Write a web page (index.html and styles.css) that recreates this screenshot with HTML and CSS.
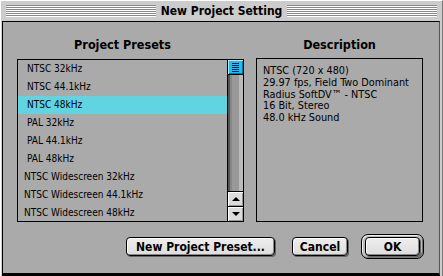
FILE: index.html
```html
<!DOCTYPE html>
<html lang="en">
<head>
  <meta charset="UTF-8">
  <meta name="viewport" content="width=device-width, initial-scale=1.0">
  <title>New Project Setting</title>
  <link rel="stylesheet" href="styles.css">
</head>
<body>
  <div class="window">
    <header class="titlebar">
      <span class="grip"></span>
      <h1 class="title">New Project Setting</h1>
      <span class="grip"></span>
    </header>
    <main class="content">
      <div class="panes">
        <section class="pane presets">
          <h2 class="pane-title">Project Presets</h2>
          <div class="listbox">
            <ul class="list">
              <li>NTSC 32kHz</li>
              <li>NTSC 44.1kHz</li>
              <li class="selected">NTSC 48kHz</li>
              <li>PAL 32kHz</li>
              <li>PAL 44.1kHz</li>
              <li>PAL 48kHz</li>
              <li class="wide">NTSC Widescreen 32kHz</li>
              <li class="wide">NTSC Widescreen 44.1kHz</li>
              <li class="wide">NTSC Widescreen 48kHz</li>
            </ul>
            <div class="scrollbar">
              <div class="thumb"><span></span><span></span><span></span><span></span><span></span></div>
              <div class="track"></div>
              <div class="arrow up"></div>
              <div class="arrow down"></div>
            </div>
          </div>
        </section>
        <section class="pane description">
          <h2 class="pane-title">Description</h2>
          <div class="desc-box">
            <p>NTSC (720 x 480)</p>
            <p>29.97 fps, Field Two Dominant</p>
            <p>Radius SoftDV&trade; - NTSC</p>
            <p>16 Bit, Stereo</p>
            <p>48.0 kHz Sound</p>
          </div>
        </section>
      </div>
      <div class="buttons">
        <button class="btn new-preset">New Project Preset...</button>
        <button class="btn cancel">Cancel</button>
        <div class="default-ring">
          <button class="btn ok">OK</button>
        </div>
      </div>
    </main>
  </div>
</body>
</html>
```

FILE: styles.css
```css
body {
  margin: 0;
  background: #aaaaaa;
}

.window {
  width: 443px;
  height: 276px;
  box-sizing: border-box;
  background: #cccccc;
  border-top: 1px solid #ffffff;
  border-left: 1px solid #ffffff;
  border-right: 1px solid #777777;
  padding: 0 2px 0 1px;
  display: flex;
  flex-direction: column;
}

.titlebar {
  height: 20px;
  display: flex;
  align-items: center;
  gap: 5px;
  padding: 0 3px 0 4px;
}

.grip {
  flex: 1;
  height: 12px;
  background: repeating-linear-gradient(#888888 0 1px, #ffffff 1px 2px);
}

.title {
  margin: 0;
  font-family: "DejaVu Sans", sans-serif;
  font-stretch: condensed;
  font-weight: bold;
  font-size: 12px;
  line-height: 16px;
  color: #000;
}

.content {
  flex: 1;
  background: #aaaaaa;
  border-top: 1px solid #000;
  border-left: 1px solid #000;
  border-bottom: 3px solid #000;
  border-right: 1px solid #555555;
  padding: 15px 15px 0 14px;
  font-family: "DejaVu Sans", sans-serif;
  font-stretch: condensed;
}

.panes {
  display: flex;
  gap: 12px;
}

.pane-title {
  margin: 0 0 6px;
  height: 16px;
  font-size: 12.5px;
  line-height: 16px;
  font-weight: bold;
  text-align: center;
  color: #000;
}

.presets {
  width: 227px;
}

.presets .pane-title {
  padding-right: 16px;
}

.description {
  width: 167px;
}

.listbox {
  height: 163px;
  box-sizing: border-box;
  border: 1px solid #000;
  display: flex;
  overflow: hidden;
}

.list {
  flex: 1;
  margin: 0;
  padding: 0;
  list-style: none;
  font-size: 10px;
}

.list li {
  height: 18px;
  line-height: 18px;
  padding-left: 9px;
  color: #000;
  white-space: nowrap;
}

.list li.wide {
  padding-left: 6px;
}

.list li.selected {
  background: #60d4e0;
}

.scrollbar {
  width: 15px;
  border-left: 1px solid #000;
  display: flex;
  flex-direction: column;
}

.thumb {
  height: 15px;
  box-sizing: border-box;
  border-bottom: 1px solid #000;
  background: #22bbee;
  box-shadow: inset 1px 1px 0 #99eeff, inset -1px -1px 0 #0077aa;
  display: flex;
  flex-direction: column;
  align-items: center;
  justify-content: center;
  gap: 1px;
}

.thumb span {
  width: 7px;
  height: 1px;
  background: #000;
}

.track {
  flex: 1;
  background: linear-gradient(90deg, #555555 0 2px, #888888 2px 4px, #999999 4px 11px, #bbbbbb 11px);
}

.arrow {
  height: 14px;
  border-top: 1px solid #000;
  background: #dddddd;
  box-shadow: inset 1px 1px 0 #ffffff, inset -1px -1px 0 #999999;
  display: flex;
  align-items: center;
  justify-content: center;
}

.arrow::before {
  content: "";
  border-left: 4px solid transparent;
  border-right: 4px solid transparent;
}

.arrow.up::before {
  border-bottom: 4px solid #000;
}

.arrow.down::before {
  border-top: 4px solid #000;
}

.desc-box {
  height: 164px;
  margin-top: -1px;
  box-sizing: border-box;
  border: 1px solid #000;
  padding: 6px 6px;
  font-size: 10.8px;
  line-height: 11.8px;
  color: #000;
}

.desc-box p {
  margin: 0;
  white-space: nowrap;
}

.buttons {
  margin-top: 12px;
  display: flex;
  justify-content: flex-end;
  align-items: center;
}

.btn {
  height: 19px;
  box-sizing: border-box;
  padding: 0;
  border: 1px solid #000;
  border-radius: 4px;
  background: linear-gradient(#eeeeee, #dddddd);
  box-shadow: inset 1px 1px 0 #ffffff, inset -1px -1px 0 #888888, 1px 1px 0 #666666;
  font-family: "DejaVu Sans", sans-serif;
  font-stretch: condensed;
  font-weight: bold;
  font-size: 12px;
  line-height: 16px;
  color: #000;
}

.new-preset {
  width: 149px;
}

.cancel {
  width: 56px;
  margin-left: 17px;
}

.default-ring {
  margin-left: 13px;
  width: 63px;
  height: 25px;
  box-sizing: border-box;
  border: 1px solid #000;
  border-radius: 7px;
  background: #bbbbbb;
  box-shadow: inset 1px 1px 0 #eeeeee, inset -1px -1px 0 #777777;
  display: flex;
  align-items: center;
  justify-content: center;
}

.ok {
  width: 55px;
}
```
